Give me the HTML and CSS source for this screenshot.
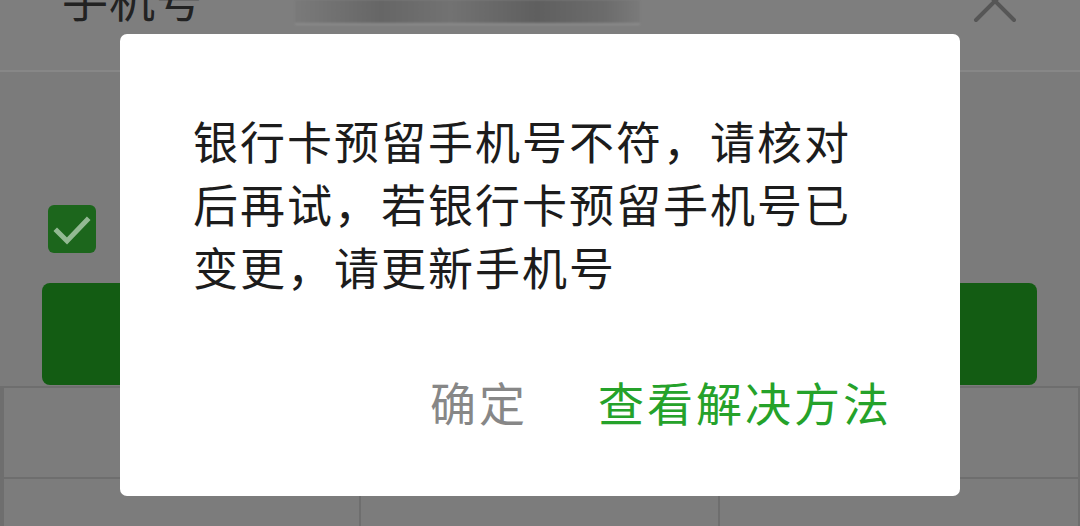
FILE: index.html
```html
<!DOCTYPE html>
<html lang="zh-CN">
<head>
<meta charset="utf-8">
<title>银行卡预留手机号不符</title>
<link rel="stylesheet" href="styles.css">
</head>
<body>
<div class="page">
  <header class="header">
    <div class="label">手机号</div>
    <div class="input-blur"></div>
    <svg class="close" width="46" height="46" viewBox="0 0 46 46">
      <path d="M4 4 L42 42 M42 4 L4 42" stroke="#565656" stroke-width="4" stroke-linecap="round" fill="none"/>
    </svg>
  </header>
  <div class="content">
    <div class="agree-row">
      <div class="checkbox">
        <svg width="48" height="48" viewBox="0 0 48 48">
          <path d="M9 26 L19 36 L39 15" stroke="#93b993" stroke-width="5" fill="none" stroke-linecap="square"/>
        </svg>
      </div>
    </div>
    <div class="primary-btn"></div>
  </div>
  <div class="keyboard">
    <div class="key"></div><div class="key"></div><div class="key"></div>
    <div class="key"></div><div class="key"></div><div class="key"></div>
  </div>
</div>

<div class="overlay">
  <div class="dialog">
    <p class="message">银行卡预留手机号不符，请核对后再试，若银行卡预留手机号已变更，请更新手机号</p>
    <div class="actions">
      <span class="btn btn-cancel">确定</span>
      <span class="btn btn-primary">查看解决方法</span>
    </div>
  </div>
</div>
</body>
</html>
```

FILE: styles.css
```css
* { box-sizing: border-box; }
html, body {
  margin: 0;
  padding: 0;
  width: 1080px;
  height: 526px;
  overflow: hidden;
  background: #7b7b7b;
  font-family: "Noto Sans CJK SC", "Noto Sans", sans-serif;
}
.page {
  width: 1080px;
  height: 526px;
  display: flex;
  flex-direction: column;
  overflow: hidden;
}
.header {
  height: 72px;
  flex: none;
  background: #7e7e7e;
  border-bottom: 2px solid #878787;
  display: flex;
  align-items: flex-start;
  padding-left: 62px;
  overflow: hidden;
}
.label {
  font-size: 46px;
  line-height: 46px;
  margin-top: -26px;
  color: #222;
  letter-spacing: 1px;
}
.input-blur {
  width: 345px;
  height: 25px;
  margin-left: 92px;
  background: linear-gradient(90deg, #7a7a7a 0%, #666 25%, #727272 45%, #5f5f5f 70%, #6c6c6c 90%, #7a7a7a 100%);
  border-bottom: 2px solid #8c8c8c;
  filter: blur(1px);
}
.close {
  margin-left: auto;
  margin-right: 62px;
  margin-top: -22px;
}
.content {
  flex: none;
  height: 314px;
  padding: 133px 43px 0 42px;
  display: flex;
  flex-direction: column;
}
.agree-row {
  display: flex;
  padding-left: 6px;
}
.checkbox {
  width: 48px;
  height: 48px;
  border-radius: 6px;
  background: #1c661c;
}
.checkbox svg { display: block; }
.primary-btn {
  margin-top: 30px;
  height: 102px;
  border-radius: 8px;
  background: #135c13;
}
.keyboard {
  flex: 1;
  min-height: 0;
  overflow: hidden;
  display: grid;
  grid-template-columns: 355px 357px 1fr;
  grid-auto-rows: 89px;
  gap: 2px;
  padding: 2px 2px 0 4px;
  background: #6e6e6e;
}
.key {
  background: #7c7c7c;
}
.overlay {
  position: fixed;
  inset: 0;
  display: flex;
  justify-content: center;
  align-items: flex-start;
  padding-top: 34px;
}
.dialog {
  width: 840px;
  height: 462px;
  background: #fff;
  border-radius: 7px;
  padding: 75px 73px 0 73px;
}
.message {
  margin: 0;
  font-size: 45px;
  line-height: 63px;
  letter-spacing: 2px;
  color: #1c1c1c;
}
.actions {
  margin-top: 72px;
  margin-right: -5px;
  display: flex;
  justify-content: flex-end;
  gap: 70px;
}
.btn {
  font-size: 46px;
  line-height: 63px;
  letter-spacing: 3px;
}
.btn-cancel { color: #878787; }
.btn-primary { color: #25a22a; }
```
